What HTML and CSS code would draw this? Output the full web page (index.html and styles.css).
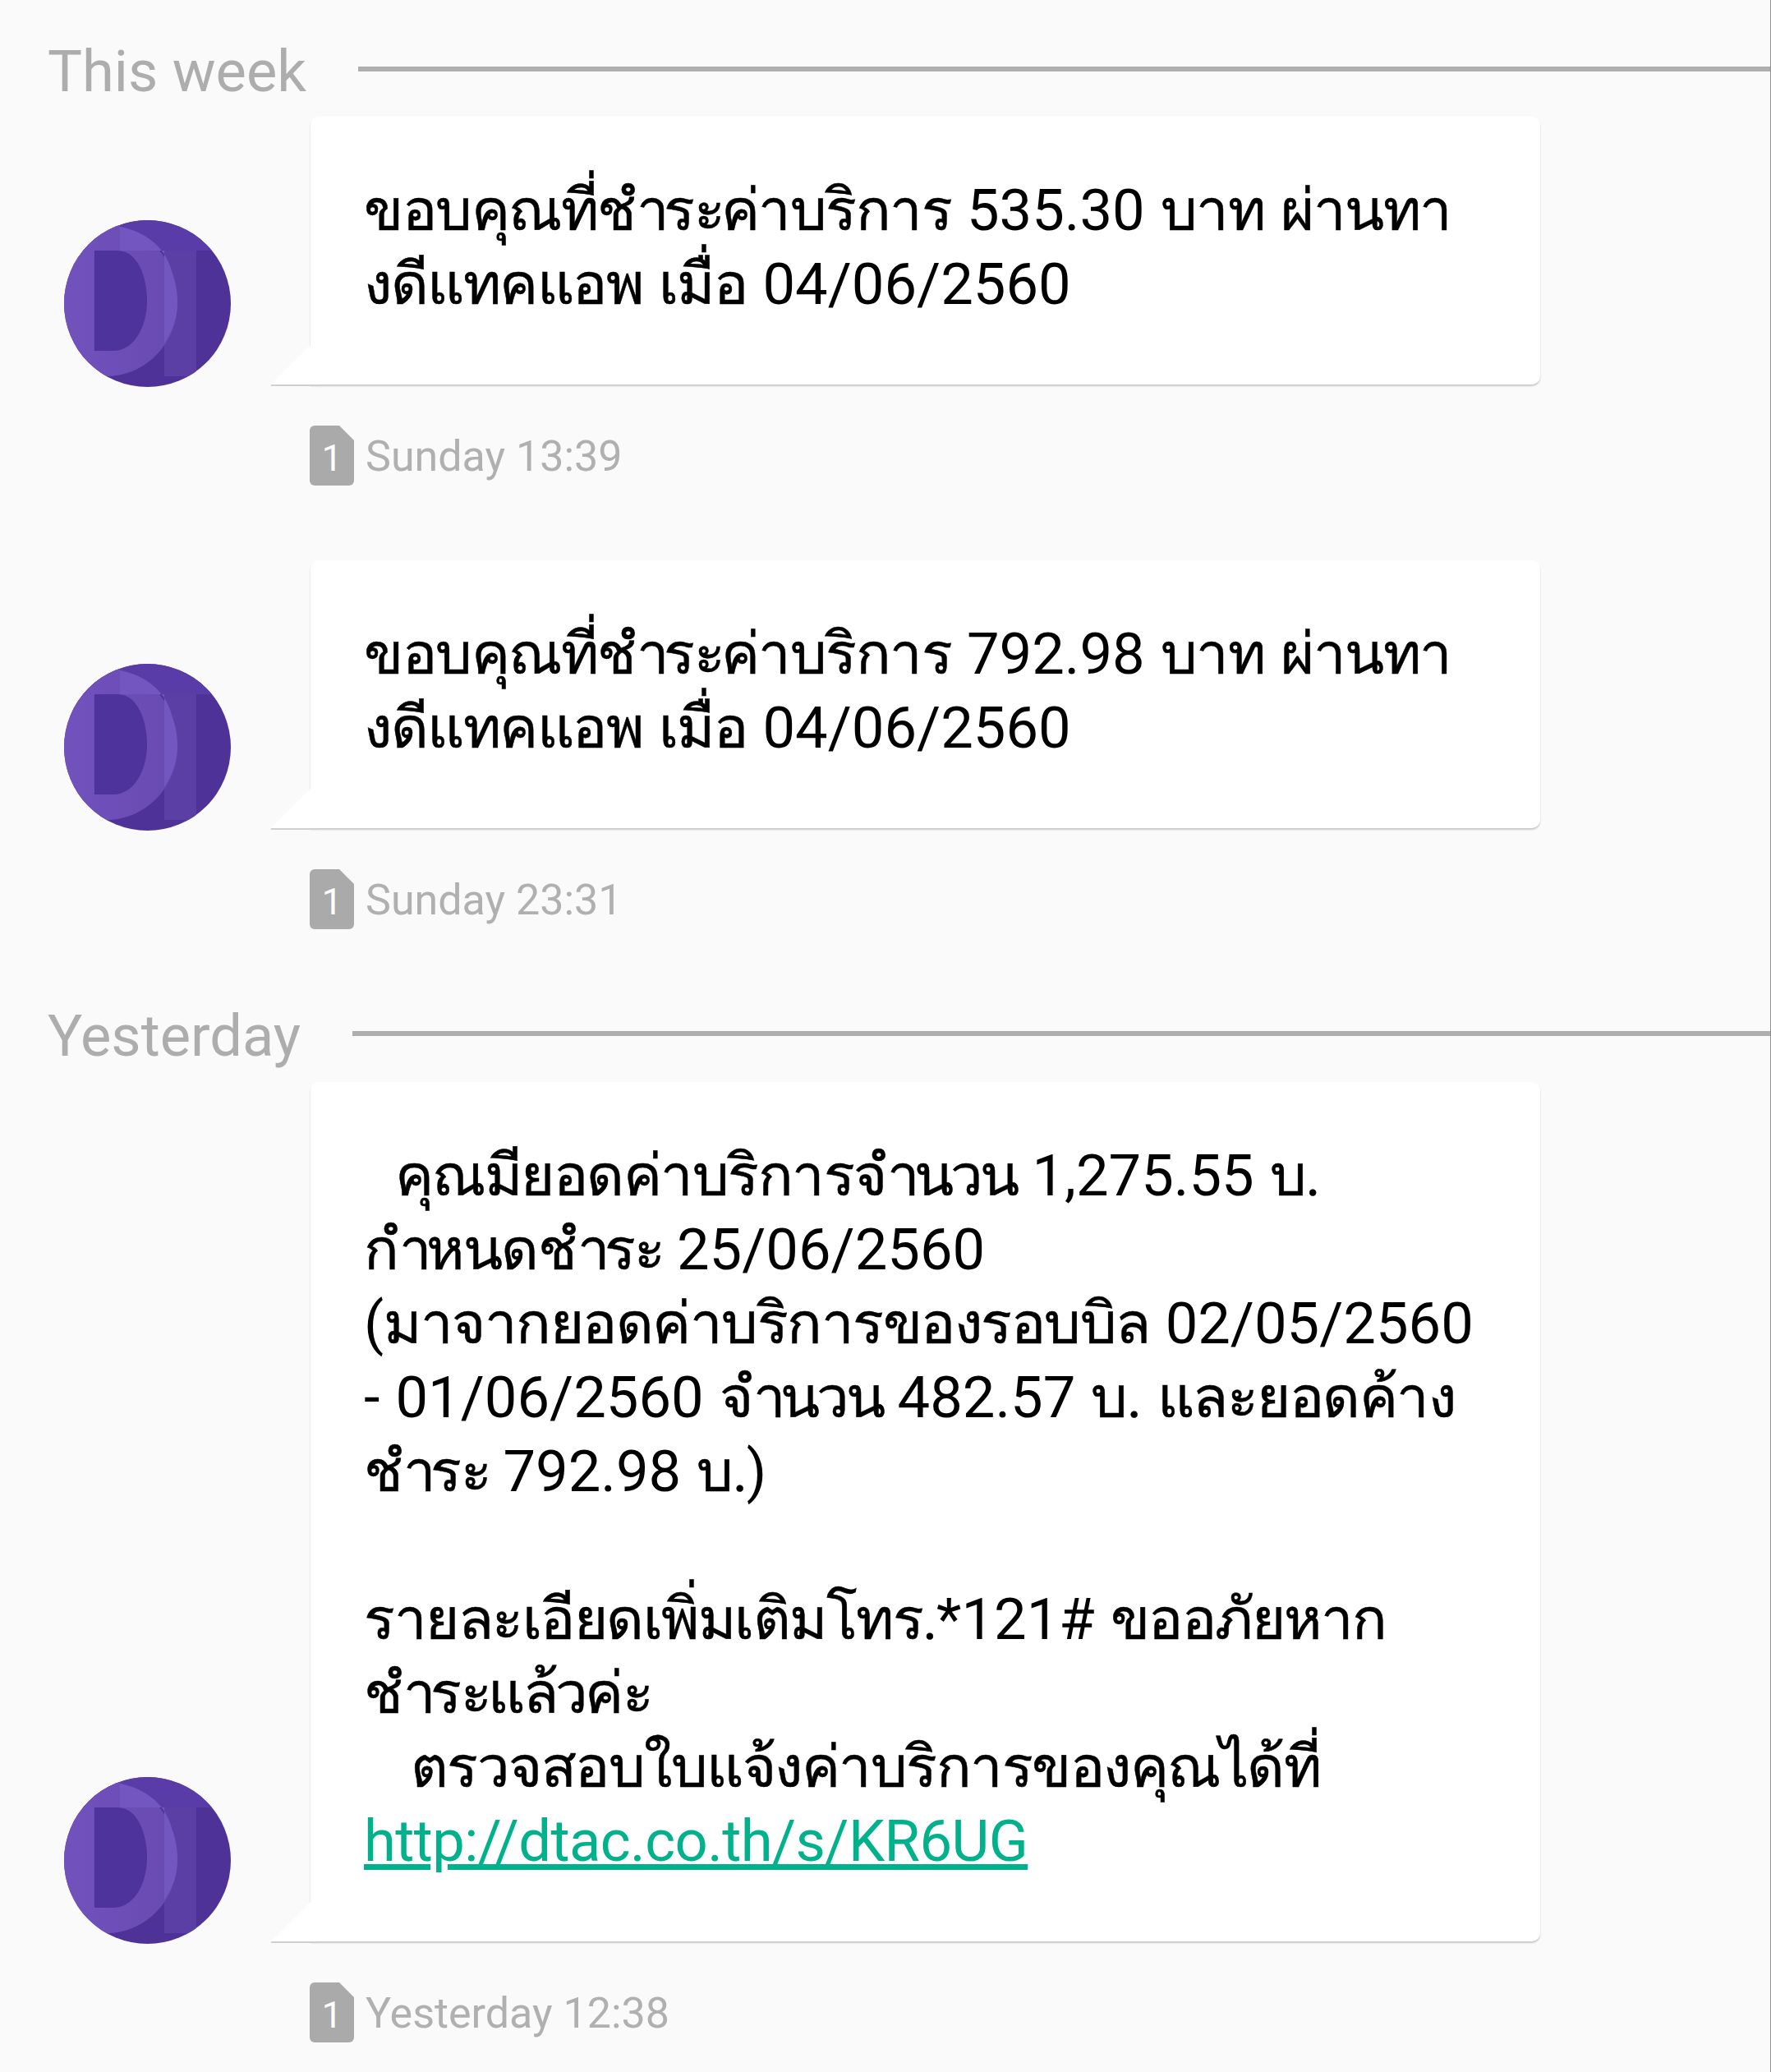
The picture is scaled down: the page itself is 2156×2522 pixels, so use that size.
FILE: index.html
```html
<!DOCTYPE html>
<html>
<head>
  <title>Messages</title>
  <meta name="viewport" content="width=device-width, initial-scale=1">
  <link rel="stylesheet" href="styles.css">
</head>
<body>
  <svg class="defs" width="0" height="0">
    <defs>
      <symbol id="avatar" viewBox="0 0 203 203">
        <clipPath id="disc"><circle cx="101.5" cy="101.5" r="101.5"/></clipPath>
        <linearGradient id="faceFill" x1="0" y1="0" x2="1" y2="0">
          <stop offset="0" stop-color="#7252bd"/>
          <stop offset="1" stop-color="#684ab2"/>
        </linearGradient>
        <g clip-path="url(#disc)">
          <rect width="203" height="203" fill="#4e3297"/>
          <rect width="203" height="37" fill="#5a3ca8"/>
          <rect x="122" y="37" width="39" height="153" fill="#5b3fa5"/>
          <path d="M-2 -2H68V8C112 16 138 58 138 100C138 150 100 188 55 190L-2 203Z" fill="url(#faceFill)"/>
          <path d="M68 8C100 14 124 34 131 62C136 76 138 88 138 100C138 116 134 132 122 150V37H68Z" fill="#7456c0"/>
          <path d="M37 37H65C90 37 101 70 101 98C101 130 85 159 60 159H37Z" fill="#4f339c"/>
        </g>
      </symbol>
      <symbol id="sim" viewBox="0 0 54 73">
        <path d="M6 0H36L54 18V67A6 6 0 0 1 48 73H6A6 6 0 0 1 0 67V6A6 6 0 0 1 6 0Z" fill="#aaaaaa"/>
      </symbol>
    </defs>
  </svg>

  <div class="section-head">
    <span class="section-title">This week</span>
    <span class="section-line"></span>
  </div>

  <div class="message">
    <svg class="avatar"><use href="#avatar"/></svg>
    <div class="bubble"><span class="th">ขอบคุณที่<span class="am">ชำ</span>ร<span class="sa">ะ</span>ค่าบริการ</span> 535.30 <span class="th">บาท ผ่านทา</span><br><span class="th">งดีแทคแอพ เมื่อ</span> 04/06/2560</div>
  </div>
  <div class="meta">
    <span class="sim"><svg class="sim-shape"><use href="#sim"/></svg><span class="sim-num">1</span></span>
    <span class="meta-text">Sunday 13:39</span>
  </div>

  <div class="message">
    <svg class="avatar"><use href="#avatar"/></svg>
    <div class="bubble"><span class="th">ขอบคุณที่<span class="am">ชำ</span>ร<span class="sa">ะ</span>ค่าบริการ</span> 792.98 <span class="th">บาท ผ่านทา</span><br><span class="th">งดีแทคแอพ เมื่อ</span> 04/06/2560</div>
  </div>
  <div class="meta">
    <span class="sim"><svg class="sim-shape"><use href="#sim"/></svg><span class="sim-num">1</span></span>
    <span class="meta-text">Sunday 23:31</span>
  </div>

  <div class="section-head second">
    <span class="section-title">Yesterday</span>
    <span class="section-line"></span>
  </div>

  <div class="message">
    <svg class="avatar"><use href="#avatar"/></svg>
    <div class="bubble">&nbsp;&nbsp;<span class="th">คุณมียอดค่าบริการ<span class="am">จำ</span><span class="tight">นวน</span></span> 1,275.55 <span class="th">บ.</span><br><span class="th"><span class="am">กำ</span>หนด<span class="am">ชำ</span>ร<span class="sa">ะ</span></span> 25/06/2560<br>(<span class="th">มาจากยอดค่าบริการของรอบบิล</span> 02/05/2560<br>- 01/06/2560 <span class="th"><span class="am">จำ</span><span class="tight">นวน</span></span> 482.57 <span class="th">บ. และยอดค้าง</span><br><span class="th"><span class="am">ชำ</span>ร<span class="sa">ะ</span></span> 792.98 <span class="th">บ.</span>)<br><br><span class="th">รายละเอียดเพิ่มเติมโทร.</span>*121# <span class="th">ขออภัยหาก</span><br><span class="th"><span class="am">ชำ</span>ร<span class="sa">ะ</span>แ<span class="tight">ล้ว</span>ค่<span class="sa">ะ</span></span><br>&nbsp;&nbsp;&nbsp;<span class="th">ตรวจสอบใบแจ้งค่าบริการของคุณได้ที่</span><br><a href="#">http://dtac.co.th/s/KR6UG</a></div>
  </div>
  <div class="meta">
    <span class="sim"><svg class="sim-shape"><use href="#sim"/></svg><span class="sim-num">1</span></span>
    <span class="meta-text">Yesterday 12:38</span>
  </div>
</body>
</html>
```

FILE: styles.css
```css
html, body { margin: 0; padding: 0; }
body { width: 2156px; height: 2522px; overflow: hidden; background: #fafafa; font-family: Roboto, "Noto Sans", sans-serif; box-sizing: border-box; border-right: 1px solid #8e8e8e; }
.defs { position: absolute; }

.section-head { display: flex; align-items: center; height: 142px; padding: 26px 0 0 58px; box-sizing: border-box; }
.section-head.second { height: 95px; padding: 0 0 23px 58px; }
.section-title { font-size: 70.4px; line-height: 1; margin-top: 6px; color: #adadad; }
.section-line { flex: 1; height: 6px; margin-left: 63px; background: #aeaeae; }

.message { display: flex; align-items: flex-end; padding-left: 78px; }
.avatar { width: 203px; height: 203px; margin-right: 97px; margin-bottom: -3px; flex: none; }
.bubble { position: relative; width: 1497px; box-sizing: border-box; padding: 69px 65px 77px; background: #fff; border-radius: 10px 10px 10px 0; box-shadow: 0 2px 2px rgba(0,0,0,.2); font-size: 70.5px; line-height: 90px; word-spacing: 1.5px; color: #000; white-space: nowrap; }
.bubble::before { content: ""; position: absolute; left: -48px; bottom: 0; width: 48px; height: 48px; background: #fff; clip-path: polygon(100% 0, 100% 100%, 0 100%); }
.bubble::after { content: ""; position: absolute; left: -48px; bottom: -2px; width: 58px; height: 2px; background: #cfcfcf; }
.bubble a { color: #00b18c; letter-spacing: -.55px; }
.th { letter-spacing: -1.5px; word-spacing: 4px; -webkit-text-stroke: 0.5px #000; }
.am { letter-spacing: -7px; }
.sa { letter-spacing: -5px; }
.tight { letter-spacing: -4px; }

.meta { display: flex; align-items: center; gap: 14px; padding-left: 377px; height: 214px; padding-bottom: 41px; box-sizing: border-box; font-size: 52px; color: #b0b0b0; }
.meta-text { margin-top: 2px; }
.sim { position: relative; display: block; width: 54px; height: 73px; flex: none; }
.sim-shape { display: block; width: 54px; height: 73px; }
.sim-num { position: absolute; left: 0; right: 0; top: 14px; text-align: center; font-size: 44px; line-height: 52px; color: #fff; }
```
